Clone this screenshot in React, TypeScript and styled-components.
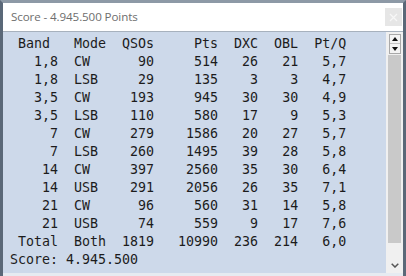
import React from "react";
import styled, { createGlobalStyle } from "styled-components";

const Global = createGlobalStyle`
  html, body { margin: 0; padding: 0; background: #5d6b7b; }
  body { width: 406px; height: 276px; overflow: hidden; }
`;

const Window = styled.div`
  width: 406px;
  height: 276px;
  box-sizing: border-box;
  display: flex;
  flex-direction: column;
  background: #ffffff;
  border-top: 3px solid #8d99a6;
  border-left: 3px solid #5a6878;
  border-right: 3px solid #5a6878;
`;

const TitleBar = styled.div`
  height: 28px;
  flex: none;
  display: flex;
  align-items: center;
  justify-content: space-between;
  padding: 0 1px 0 8px;
  background: #ffffff;
  border-bottom: 1px solid #a7b1bd;
`;

const Title = styled.span`
  font-family: "Open Sans", "Noto Sans", sans-serif;
  font-size: 11.6px;
  color: #6e6e6e;
  letter-spacing: -0.1px;
  margin-top: -2px;
`;

const CloseBox = styled.div`
  width: 17px;
  height: 18px;
  margin-top: 0px;
  background: #e6e6e6;
  display: flex;
  align-items: center;
  justify-content: center;
`;

const Body = styled.div`
  flex: 1;
  display: flex;
  min-height: 0;
  border-bottom: 3px solid #e6ebf1;
`;

const List = styled.div`
  flex: 1;
  background: #cdd9ea;
  padding: 3px 0 0 7px;
  font-family: "DejaVu Sans Mono", "Liberation Mono", monospace;
  font-size: 13.3px;
  line-height: 18px;
  color: #1c1c1c;
  white-space: pre;
`;

const Row = styled.div`
  display: grid;
  grid-template-columns: 6ch 2ch 4ch 6ch 8ch 5ch 5ch 6ch;
  height: 18px;
`;

const Cell = styled.span<{ $left?: boolean; $indent?: boolean }>`
  text-align: ${(p) => (p.$left ? "left" : "right")};
  padding-left: ${(p) => (p.$indent ? "1ch" : "0")};
`;

const ScoreLine = styled.div`
  height: 18px;
`;

const ScrollCol = styled.div`
  width: 17px;
  flex: none;
  background: #f0f0f0;
  display: flex;
  flex-direction: column;
  align-items: flex-start;
  padding-top: 2px;
  box-sizing: border-box;
`;

const Spin = styled.div`
  width: 12px;
  height: 20px;
  margin-left: 3px;
  box-sizing: border-box;
  border: 1px solid #a9a9a9;
  background: #f4f4f4;
  display: grid;
  grid-template-rows: 1fr 1fr;
`;

const SpinBtn = styled.div<{ $top?: boolean }>`
  display: flex;
  align-items: center;
  justify-content: center;
  border-bottom: ${(p) => (p.$top ? "1px solid #c4c4c4" : "none")};
`;

const Thumb = styled.div`
  width: 13px;
  height: 188px;
  margin: 1px 0 0 2px;
  background: #c9c9c9;
`;

const DownBtn = styled.div`
  width: 17px;
  flex: 1;
  display: flex;
  align-items: flex-end;
  justify-content: center;
  padding-bottom: 5px;
  box-sizing: border-box;
`;

type R = [string, string, string, string, string, string, string];

const rows: R[] = [
  ["1,8", "CW", "90", "514", "26", "21", "5,7"],
  ["1,8", "LSB", "29", "135", "3", "3", "4,7"],
  ["3,5", "CW", "193", "945", "30", "30", "4,9"],
  ["3,5", "LSB", "110", "580", "17", "9", "5,3"],
  ["7", "CW", "279", "1586", "20", "27", "5,7"],
  ["7", "LSB", "260", "1495", "39", "28", "5,8"],
  ["14", "CW", "397", "2560", "35", "30", "6,4"],
  ["14", "USB", "291", "2056", "26", "35", "7,1"],
  ["21", "CW", "96", "560", "31", "14", "5,8"],
  ["21", "USB", "74", "559", "9", "17", "7,6"],
  ["Total", "Both", "1819", "10990", "236", "214", "6,0"],
];

const DataRow = ({ r }: { r: R }) => (
  <Row>
    <Cell>{r[0]}</Cell>
    <span />
    <Cell $left>{r[1]}</Cell>
    <Cell>{r[2]}</Cell>
    <Cell>{r[3]}</Cell>
    <Cell>{r[4]}</Cell>
    <Cell>{r[5]}</Cell>
    <Cell>{r[6]}</Cell>
  </Row>
);

export default function App() {
  return (
    <>
      <Global />
      <Window>
        <TitleBar>
          <Title>Score - 4.945.500 Points</Title>
          <CloseBox>
            <svg width="9" height="9" viewBox="0 0 9 9">
              <path d="M1 1L8 8M8 1L1 8" stroke="#f7f7f7" strokeWidth="1.2" />
            </svg>
          </CloseBox>
        </TitleBar>
        <Body>
          <List>
            <Row>
              <Cell $left $indent>Band</Cell>
              <span />
              <Cell $left>Mode</Cell>
              <Cell>QSOs</Cell>
              <Cell>Pts</Cell>
              <Cell>DXC</Cell>
              <Cell>OBL</Cell>
              <Cell>Pt/Q</Cell>
            </Row>
            {rows.map((r, i) => (
              <DataRow key={i} r={r} />
            ))}
            <ScoreLine>Score: 4.945.500</ScoreLine>
          </List>
          <ScrollCol>
            <Spin>
              <SpinBtn $top>
                <svg width="6" height="4" viewBox="0 0 6 4">
                  <path d="M3 0L6 4H0Z" fill="#111" />
                </svg>
              </SpinBtn>
              <SpinBtn>
                <svg width="6" height="4" viewBox="0 0 6 4">
                  <path d="M0 0H6L3 4Z" fill="#111" />
                </svg>
              </SpinBtn>
            </Spin>
            <Thumb />
            <DownBtn>
              <svg width="8" height="5" viewBox="0 0 8 5">
                <path d="M0.7 0.7L4 4L7.3 0.7" stroke="#555" strokeWidth="1.5" fill="none" />
              </svg>
            </DownBtn>
          </ScrollCol>
        </Body>
      </Window>
    </>
  );
}
